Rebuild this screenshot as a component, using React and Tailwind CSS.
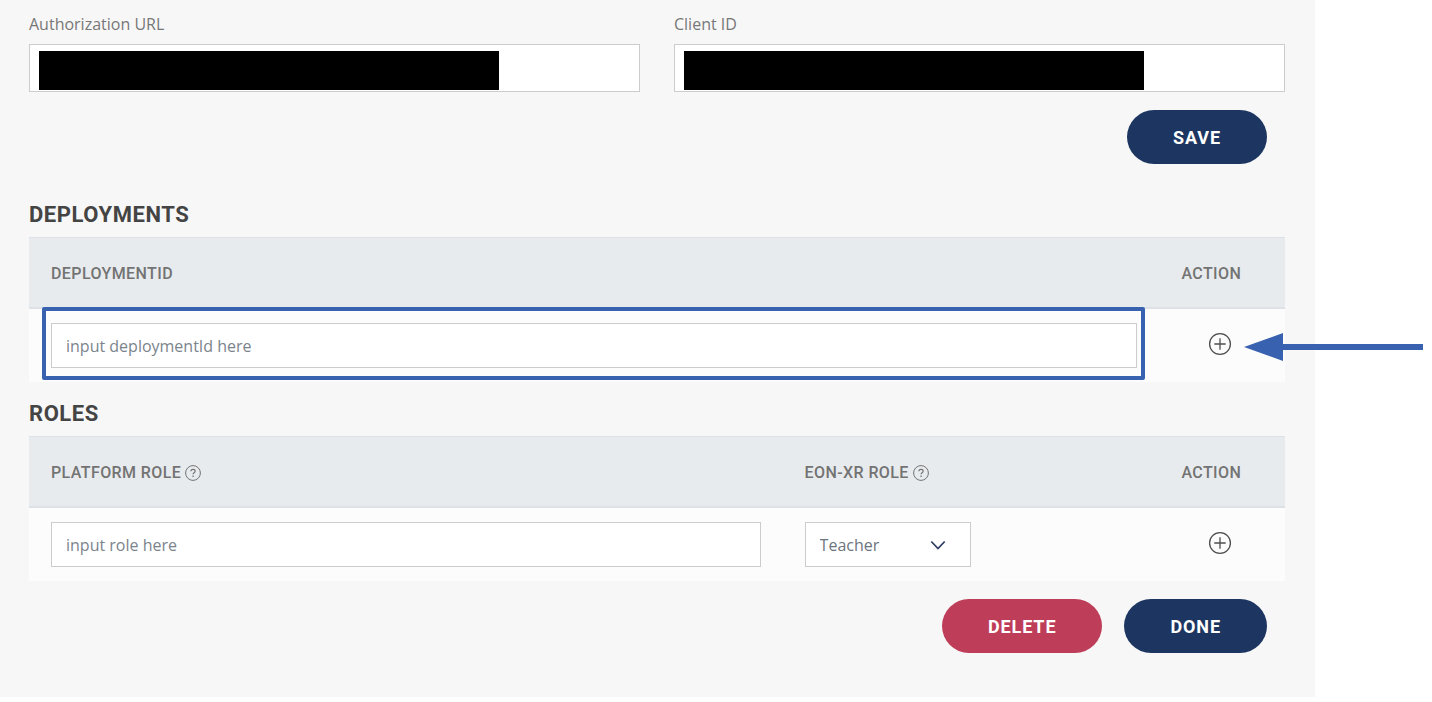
import { useState } from 'react'

function RedactedField({ id, label }) {
  return (
    <div>
      <label htmlFor={id} className="block text-base leading-6 text-[#777777]">
        {label}
      </label>
      <div className="relative mt-2">
        <input
          id={id}
          type="text"
          className="block h-12 w-full border border-[#cccccc] bg-white px-3.5 text-base text-[#6c757d] focus:outline-none"
        />
        <span className="pointer-events-none absolute top-[7px] left-2.5 h-[39px] w-[460px] max-w-[90%] bg-black" />
      </div>
    </div>
  )
}

function PillButton({ children, className }) {
  return (
    <button
      type="button"
      className={`h-[54px] rounded-full px-[46px] pt-0.5 font-[Roboto,sans-serif] text-lg font-bold tracking-wider text-white ${className}`}
    >
      {children}
    </button>
  )
}

function HelpIcon() {
  return (
    <svg viewBox="0 0 16 16" className="h-4 w-4" fill="none" stroke="currentColor" aria-hidden="true">
      <circle cx="8" cy="8" r="7.4" strokeWidth="1" />
      <path d="M5.9 6.3c0-1.2.9-1.9 2.1-1.9s2.1.7 2.1 1.8c0 1.5-2 1.5-2 3.1" strokeWidth="1.2" />
      <path d="M8.1 10.6v1.3" strokeWidth="1.3" />
    </svg>
  )
}

function AddButton({ label }) {
  return (
    <button type="button" aria-label={label} className="block text-[#4d4d4d]">
      <svg viewBox="0 0 24 24" className="h-6 w-6" fill="none" stroke="currentColor" aria-hidden="true">
        <circle cx="12" cy="12" r="10.4" strokeWidth="1.3" />
        <path d="M12 6.3v11.4M6.3 12h11.4" strokeWidth="1.3" />
      </svg>
    </button>
  )
}

function HeaderCell({ children, help, className }) {
  return (
    <th
      scope="col"
      className={`h-[72px] border-t border-b-2 border-[#dee2e6] px-[22px] pt-0.5 text-left font-[Roboto,sans-serif] text-base font-medium tracking-wide text-[#737373] ${className}`}
    >
      <span className="flex items-center gap-1">
        {children}
        {help && <HelpIcon />}
      </span>
    </th>
  )
}

const inputClass =
  'block h-[45px] w-full border border-[#cccccc] bg-white px-3.5 text-base text-[#6c757d] placeholder:text-[#7b848c] focus:outline-none'

const headingClass = 'font-[Roboto,sans-serif] text-[22px] leading-7 font-bold tracking-wide text-[#444444]'

export default function App() {
  const [deploymentId, setDeploymentId] = useState('')
  const [role, setRole] = useState('')
  const [eonRole, setEonRole] = useState('Teacher')

  return (
    <div className="bg-white pr-[117px] font-['Open_Sans',sans-serif]">
      <main className="bg-[#f7f7f7] pt-3 pr-[30px] pb-11 pl-[29px]">
        <div className="grid grid-cols-2 gap-[34px]">
          <RedactedField id="auth-url" label="Authorization URL" />
          <RedactedField id="client-id" label="Client ID" />
        </div>

        <div className="mt-[18px] flex justify-end pr-[18px]">
          <PillButton className="bg-[#1d3661]">SAVE</PillButton>
        </div>

        <section className="mt-[37px]">
          <h2 className={headingClass}>DEPLOYMENTS</h2>
          <table className="mt-2 w-full table-fixed border-separate border-spacing-0">
            <thead className="bg-[#e8ebee]">
              <tr>
                <HeaderCell className="w-[90%]">DEPLOYMENTID</HeaderCell>
                <HeaderCell className="w-[10%]">ACTION</HeaderCell>
              </tr>
            </thead>
            <tbody className="bg-[#fcfcfc]">
              <tr>
                <td className="h-[73px] px-[22px]">
                  <div className="relative">
                    <input
                      type="text"
                      aria-label="Deployment ID"
                      placeholder="input deploymentId here"
                      value={deploymentId}
                      onChange={(e) => setDeploymentId(e.target.value)}
                      className={inputClass}
                    />
                    <span className="pointer-events-none absolute -top-4 -right-2 -bottom-3 -left-[9px] rounded-xs border-4 border-[#3862af]" />
                  </div>
                </td>
                <td className="pb-1 pl-[49px]">
                  <div className="relative w-6">
                    <AddButton label="Add deployment" />
                    {/* callout arrow pointing at the add button */}
                    <svg
                      viewBox="0 0 179 28"
                      className="pointer-events-none absolute top-px left-9 h-7 w-[179px] max-w-none"
                      fill="#3862af"
                      aria-hidden="true"
                    >
                      <path d="M0 14 39 0V11H179V17H39V28Z" />
                    </svg>
                  </div>
                </td>
              </tr>
            </tbody>
          </table>
        </section>

        <section className="mt-[18px]">
          <h2 className={headingClass}>ROLES</h2>
          <table className="mt-2 w-full table-fixed border-separate border-spacing-0">
            <thead className="bg-[#e8ebee]">
              <tr>
                <HeaderCell className="w-[60%]" help>PLATFORM ROLE</HeaderCell>
                <HeaderCell className="w-[30%]" help>EON-XR ROLE</HeaderCell>
                <HeaderCell className="w-[10%]">ACTION</HeaderCell>
              </tr>
            </thead>
            <tbody className="bg-[#fcfcfc]">
              <tr>
                <td className="h-[73px] px-[22px]">
                  <input
                    type="text"
                    aria-label="Platform role"
                    placeholder="input role here"
                    value={role}
                    onChange={(e) => setRole(e.target.value)}
                    className={inputClass}
                  />
                </td>
                <td className="px-[22px]">
                  <div className="relative w-[166px]">
                    <select
                      aria-label="EON-XR role"
                      value={eonRole}
                      onChange={(e) => setEonRole(e.target.value)}
                      className={`appearance-none ${inputClass}`}
                    >
                      <option>Teacher</option>
                      <option>Student</option>
                      <option>Admin</option>
                    </select>
                    <svg
                      viewBox="0 0 16 16"
                      className="pointer-events-none absolute top-[15px] right-[25px] h-4 w-4"
                      fill="none"
                      stroke="#2f3f63"
                      strokeWidth="1.8"
                      aria-hidden="true"
                    >
                      <path d="M1.300 4.500 8 11.500l6.700-7" />
                    </svg>
                  </div>
                </td>
                <td className="pb-1 pl-[49px]">
                  <AddButton label="Add role" />
                </td>
              </tr>
            </tbody>
          </table>
        </section>

        <div className="mt-[18px] flex justify-end gap-[22px] pr-[18px]">
          <PillButton className="bg-[#be3d59]">DELETE</PillButton>
          <PillButton className="bg-[#1d3661]">DONE</PillButton>
        </div>
      </main>
    </div>
  )
}
